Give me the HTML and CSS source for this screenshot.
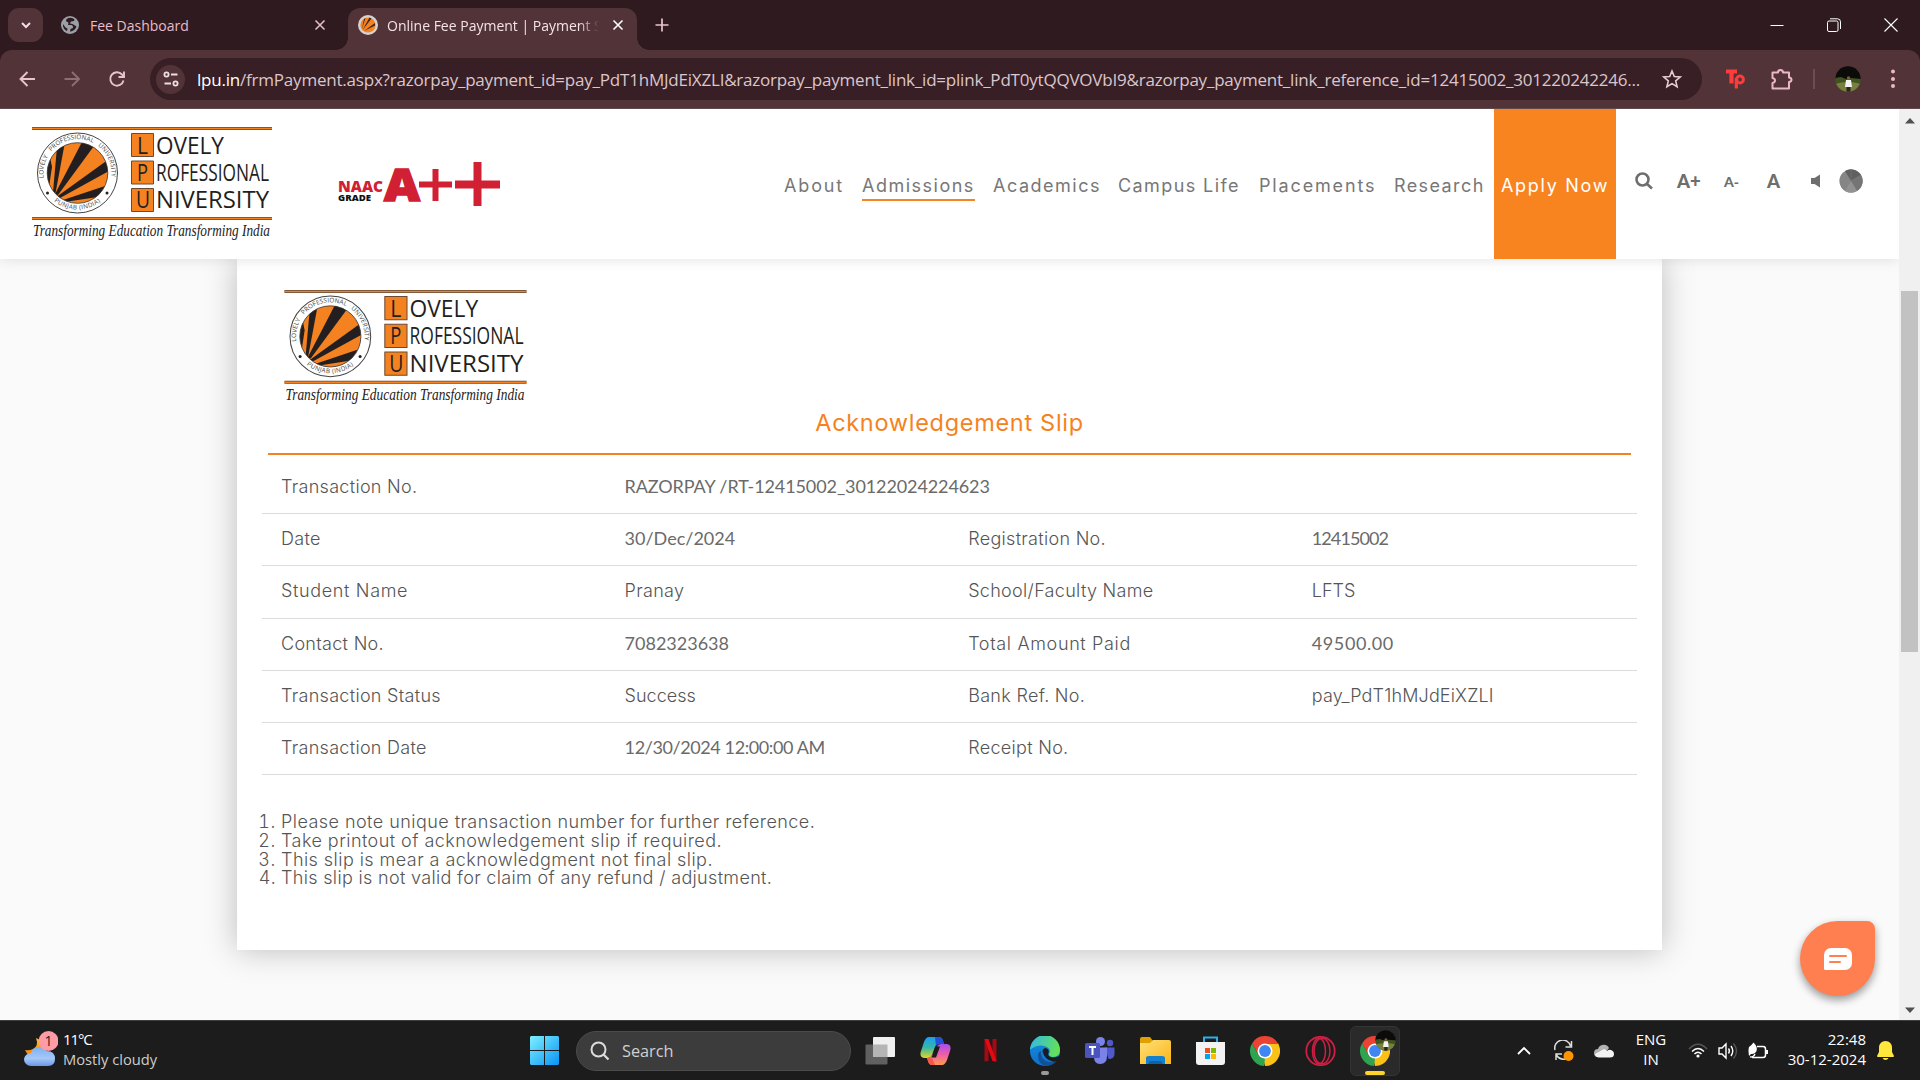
FILE: index.html
```html
<!DOCTYPE html>
<html lang="en">
<head>
<meta charset="utf-8">
<title>Online Fee Payment | Payment Slip</title>
<link rel="stylesheet" href="styles.css">
</head>
<body>
<svg class="defs" width="0" height="0">
  <defs>
    <clipPath id="sunClip"><circle cx="45.5" cy="46" r="30.3"/></clipPath>
    <linearGradient id="gWin" x1="0" y1="0" x2="1" y2="1"><stop offset="0" stop-color="#7df0ff"/><stop offset="1" stop-color="#0a94f5"/></linearGradient>
    <linearGradient id="gEdgeA" x1="0" y1="0" x2="1" y2="0.3"><stop offset="0" stop-color="#2fb7ee"/><stop offset="1" stop-color="#62e05a"/></linearGradient>
    <linearGradient id="gEdgeB" x1="0" y1="0" x2="0" y2="1"><stop offset="0" stop-color="#1490df"/><stop offset="1" stop-color="#0f6fc9"/></linearGradient>
    <linearGradient id="gCopA" x1="0" y1="0" x2="0" y2="1"><stop offset="0" stop-color="#1aa0f5"/><stop offset=".5" stop-color="#35b7a5"/><stop offset="1" stop-color="#e2d527"/></linearGradient>
    <linearGradient id="gCopB" x1="0" y1="0" x2="0" y2="1"><stop offset="0" stop-color="#a64df0"/><stop offset=".5" stop-color="#ee5fa5"/><stop offset="1" stop-color="#ff9a4d"/></linearGradient>
    <linearGradient id="gCloud" x1="0" y1="0" x2="0" y2="1"><stop offset="0" stop-color="#7db0f3"/><stop offset=".6" stop-color="#a5c8f8"/><stop offset="1" stop-color="#6a97ea"/></linearGradient>
    <linearGradient id="gMoon" x1="0" y1="0" x2="0" y2="1"><stop offset="0" stop-color="#fbc02d"/><stop offset="1" stop-color="#f57c00"/></linearGradient>
    <linearGradient id="gFolder" x1="0" y1="0" x2="1" y2="1"><stop offset="0" stop-color="#ffe07a"/><stop offset="1" stop-color="#fbb516"/></linearGradient>
    <symbol id="lpu" viewBox="0 0 240 116">
      <path d="M0 1.5H240M0 91.5H240" stroke="#5e4a3c" stroke-width="3"/>
      <path d="M0 1.5H240M0 91.5H240" stroke="#f58220" stroke-width="1.6"/>
      <circle cx="45.5" cy="46" r="40" fill="#fff" stroke="#444" stroke-width="1"/>
      <circle cx="45.5" cy="46" r="30.3" fill="#f58220"/>
      <g clip-path="url(#sunClip)" fill="#231f20">
        <path d="M21 65L25 20L33 15L23.500 66Z"/>
        <path d="M23 67L50.500 14L62 19L26 68Z"/>
        <path d="M25 69.500L77 32L77 44L28 71Z"/>
        <path d="M31 73L73 59L66 70L36 74.500Z"/>
        <path d="M17 60L14 40L18 30L20 40Z"/>
      </g>
      <circle cx="45.5" cy="46" r="30.3" fill="none" stroke="#333" stroke-width=".8"/>
      <path id="ringTop" d="M12 52A34 34 0 1 1 79 52" fill="none"/>
      <path id="ringBot" d="M19 71.5A37.5 37.5 0 0 0 72 71.5" fill="none"/>
      <g class="ring-text">
        <text><textPath href="#ringTop" startOffset="1" textLength="115">LOVELY &#160; PROFESSIONAL &#160; UNIVERSITY</textPath></text>
        <text><textPath href="#ringBot" startOffset="4" textLength="50">PUNJAB (INDIA)</textPath></text>
      </g>
      <circle cx="15.500" cy="66" r="1.500" fill="#222"/><circle cx="75" cy="66" r="1.500" fill="#222"/>
      <g fill="#f58220" stroke="#6b4a33" stroke-width="1"><path d="M99.500 6.500h22v23h-22zM99.500 34h22v23h-22zM99.500 61.500h22v23h-22z"/></g>
      <g class="logo-caps">
        <text x="105" y="26.500" textLength="11" lengthAdjust="spacingAndGlyphs">L</text>
        <text x="105" y="53.500" textLength="11" lengthAdjust="spacingAndGlyphs">P</text>
        <text x="104" y="81" textLength="14" lengthAdjust="spacingAndGlyphs">U</text>
        <text x="124" y="26.500" textLength="68" lengthAdjust="spacingAndGlyphs">OVELY</text>
        <text x="124" y="53.500" textLength="113" lengthAdjust="spacingAndGlyphs">ROFESSIONAL</text>
        <text x="124" y="81" textLength="113" lengthAdjust="spacingAndGlyphs">NIVERSITY</text>
      </g>
      <text class="logo-motto" x="1" y="109" textLength="237" lengthAdjust="spacingAndGlyphs">Transforming Education Transforming India</text>
    </symbol>
    <symbol id="chrome" viewBox="0 0 30 30">
      <path d="M15 15L28 7.500A15 15 0 0 1 15 30Z" fill="#fbc116"/>
      <path d="M15 7.500H28A15 15 0 0 1 28.700 9L20 15Z" fill="#fbc116"/>
      <path d="M21.500 18.700L15 30L13 22Z" fill="#fbc116"/>
      <path d="M2 7.500A15 15 0 0 1 28 7.500H15L8.500 18.700Z" fill="#ea4335"/>
      <path d="M2 7.500L8.500 18.700L15 22.500L14 30A15 15 0 0 1 2 7.500Z" fill="#30a350"/>
      <circle cx="15" cy="15" r="7.500" fill="#fff"/><circle cx="15" cy="15" r="5.900" fill="#3f85f4"/>
    </symbol>
    <symbol id="portrait" viewBox="0 0 26 26">
      <clipPath id="avClip"><circle cx="13" cy="13" r="12.700"/></clipPath>
      <g clip-path="url(#avClip)">
        <path d="M0 0H26V13H0Z" fill="#0b0b0a"/><path d="M0 12l6-1 5 2 5-1 10 1V26H0Z" fill="#41531f"/><path d="M0 18q13-4 26 0V26H0Z" fill="#77803f"/>
        <path d="M11 14h5l1 7h-7Z" fill="#f3f3f3"/><circle cx="13.500" cy="12" r="1.700" fill="#7a5b45"/><path d="M11.500 21h4v5h-4Z" fill="#2a241e"/>
      </g>
    </symbol>
  </defs>
</svg>

<header class="tabs">
  <button class="tab-search"><svg width="14" height="14" viewBox="0 0 14 14"><path d="M3 5l4 4 4-4" fill="none" stroke="#f2dfe3" stroke-width="2"/></svg></button>
  <div class="tab tab-idle">
    <svg width="18" height="18" viewBox="0 0 18 18"><circle cx="9" cy="9" r="9" fill="#9aa0a6"/><path d="M9.500 1.800Q5.500 2 5 4.500q0 1.500 2.500 2l-.5 2.500h3.500q2 .5 1.500 3l-2.500 1-.5 2.700q5-1 6.500-5.200l-4-2.500-2.500-.5 1-2 3-.5 .5-1.500Q12 2 9.500 1.800ZM2 8q-.5 4 3 6.500l1 .5.5-2.500-2-1Z" fill="#2f1a1f"/></svg>
    <span class="tab-title t-idle">Fee Dashboard</span>
    <svg class="x" width="12" height="12" viewBox="0 0 12 12"><path d="M1.500 1.500l9 9M10.500 1.500l-9 9" stroke="#e3bcc6" stroke-width="1.600"/></svg>
  </div>
  <div class="tab tab-live">
    <svg width="20" height="20" viewBox="0 0 20 20"><circle cx="10" cy="10" r="10" fill="#d6d2d2"/><circle cx="10" cy="10" r="7.600" fill="#f58220"/><path d="M4 14L6 4l1.500-1zM4.500 15L11.500 2.500l2 1zM6 16l11-8v2.500z" fill="#3a2a22"/></svg>
    <span class="tab-title t-live">Online Fee Payment | Payment S</span>
    <svg class="x" width="12" height="12" viewBox="0 0 12 12"><path d="M1.500 1.500l9 9M10.500 1.500l-9 9" stroke="#fff" stroke-width="1.600"/></svg>
  </div>
  <svg class="plus" width="14" height="14" viewBox="0 0 14 14"><path d="M7 0.500v13M0.500 7h13" stroke="#e9c5ce" stroke-width="1.700"/></svg>
  <div class="win">
    <svg width="14" height="14" viewBox="0 0 14 14"><path d="M0.500 7.500h13" stroke="#fff" stroke-width="1"/></svg>
    <svg width="14" height="14" viewBox="0 0 14 14" fill="none" stroke="#fff"><rect x=".5" y="3" width="10.500" height="10.500" rx="1.500"/><path d="M3 .8h7.500a3 3 0 0 1 3 3V11"/></svg>
    <svg width="14" height="14" viewBox="0 0 14 14"><path d="M.5.5l13 13M13.500.5l-13 13" stroke="#fff" stroke-width="1.100"/></svg>
  </div>
</header>

<div class="toolbar">
  <svg class="nav-ic" width="20" height="20" viewBox="0 0 20 20" fill="none" stroke="#eac4cd" stroke-width="1.900"><path d="M18 10H4M10.500 3l-7 7 7 7"/></svg>
  <svg class="nav-ic" width="20" height="20" viewBox="0 0 20 20" fill="none" stroke="#8e6d74" stroke-width="1.900"><path d="M2.500 10h14M10 3l7 7-7 7"/></svg>
  <svg class="nav-ic" width="20" height="20" viewBox="0 0 20 20" fill="none" stroke="#eac4cd" stroke-width="1.900"><path d="M16.500 11.500A6.700 6.700 0 1 1 15 5.500l1.500 1.800M17 2.500V8h-5.500"/></svg>
  <div class="omni">
    <span class="chip"><svg width="16" height="16" viewBox="0 0 16 16" fill="none" stroke="#eedde1" stroke-width="1.800"><circle cx="3.500" cy="3.500" r="2.100"/><path d="M8 3.500h6.500M1.500 12.500H8"/><circle cx="12.500" cy="12.500" r="2.100"/></svg></span>
    <span class="url"><b>lpu.in</b>/frmPayment.aspx?razorpay_payment_id=pay_PdT1hMJdEiXZLI&amp;razorpay_payment_link_id=plink_PdT0ytQQVOVbI9&amp;razorpay_payment_link_reference_id=12415002_301220242246...</span>
    <svg class="star" width="20" height="20" viewBox="0 0 20 20"><path d="M10 2l2.300 5.500 6 .5-4.600 3.900 1.400 5.800L10 14.600l-5.100 3.100 1.400-5.800L1.700 8l6-.5z" fill="none" stroke="#e3cdd2" stroke-width="1.600"/></svg>
  </div>
  <svg class="tp" width="20" height="22" viewBox="0 0 20 22"><path d="M0 3.500h11M5.500 3.500v12" stroke-width="4.200"/><circle cx="14" cy="11.500" r="3.400" stroke-width="3"/><path d="M10.300 10v10.500" stroke-width="3.200"/></svg>
  <svg class="puz" width="23" height="23" viewBox="0 0 23 23"><path d="M2.500 4.500H8q0-2.500 2.500-2.500T13 4.500h6v5q2.500.3 2.500 2.300T19 14v6.500H2.500V15q2.500-.5 2.500-2.500T2.500 10z" fill="none" stroke="#eab8c6" stroke-width="2" stroke-linejoin="round"/></svg>
  <i class="vr"></i>
  <svg class="av" width="26" height="26"><use href="#portrait"/></svg>
  <svg class="dots" width="6" height="20" viewBox="0 0 6 20" fill="#eab8c6"><circle cx="3" cy="2.500" r="2"/><circle cx="3" cy="10" r="2"/><circle cx="3" cy="17" r="2"/></svg>
</div>

<div class="view">
  <div class="page">
    <header class="site-head">
      <svg class="brand" width="240" height="116"><use href="#lpu"/></svg>
      <svg class="naac" width="164" height="46" viewBox="0 0 164 46">
        <text class="naac-a" x="0" y="30" textLength="45" lengthAdjust="spacingAndGlyphs">NAAC</text>
        <text class="naac-g" x="0" y="39" textLength="33" lengthAdjust="spacingAndGlyphs">GRADE</text>
        <text class="naac-big" x="46" y="38.500" textLength="36" lengthAdjust="spacingAndGlyphs">A</text>
        <path d="M81 22.500h33M97.500 7v32" stroke="#d12033" stroke-width="6"/><path d="M117 22.500h45M139.500 0v44" stroke="#d12033" stroke-width="8"/>
      </svg>
      <nav class="menu">
        <a class="m1">About</a><a class="m2 on">Admissions</a><a class="m3">Academics</a><a class="m4">Campus Life</a><a class="m5">Placements</a><a class="m6">Research</a>
      </nav>
      <a class="apply"><span>Apply Now</span></a>
      <div class="tools">
        <svg width="18" height="18" viewBox="0 0 18 18" fill="none" stroke="#6e6e6e" stroke-width="2.600"><circle cx="7.500" cy="7.500" r="6"/><path d="M12 12l5 4.500"/></svg>
        <b class="a-plus">A+</b><b class="a-minus">A-</b><b class="a-std">A</b>
        <svg class="spk" width="10" height="14" viewBox="0 0 10 14"><path d="M0 4h3.500L9 0.500v13L3.500 10H0z" fill="#6e6e6e"/></svg>
        <svg class="pie" width="24" height="24" viewBox="0 0 24 24"><circle cx="12" cy="12" r="11.600" fill="#858585"/><path d="M12 12L6 2A11.600 11.600 0 0 1 22 6Z" fill="#606060"/><path d="M12 12L22 6A11.600 11.600 0 0 1 18 22Z" fill="#757575"/><path d="M12 12L18 22A11.600 11.600 0 0 1 6 22Z" fill="#929292"/><path d="M12 12V0.500M12 12L22 6" stroke="#777" stroke-width=".7"/></svg>
      </div>
    </header>
    <main class="card">
      <svg class="card-logo" width="243" height="117"><use href="#lpu"/></svg>
      <h1><span>Acknowledgement Slip</span></h1>
      <div class="grid">
        <div class="row"><span>Transaction No.</span><span class="code">RAZORPAY /RT-12415002_30122024224623</span></div>
        <div class="row"><span>Date</span><span class="digits">30/Dec/2024</span><span>Registration No.</span><span class="narrow">12415002</span></div>
        <div class="row"><span class="name">Student Name</span><span>Pranay</span><span>School/Faculty Name</span><span class="caps">LFTS</span></div>
        <div class="row"><span>Contact No.</span><span class="digits">7082323638</span><span class="name">Total Amount Paid</span><span class="amount">49500.00</span></div>
        <div class="row"><span>Transaction Status</span><span class="caps">Success</span><span>Bank Ref. No.</span><span class="ref">pay_PdT1hMJdEiXZLI</span></div>
        <div class="row"><span>Transaction Date</span><span class="stamp">12/30/2024 12:00:00 AM</span><span>Receipt No.</span><span></span></div>
      </div>
      <ol>
        <li>Please note unique transaction number for further reference.</li>
        <li>Take printout of acknowledgement slip if required.</li>
        <li>This slip is mear a acknowledgment not final slip.</li>
        <li class="long">This slip is not valid for claim of any refund / adjustment.</li>
      </ol>
    </main>
    <div class="chat"><svg width="28" height="22" viewBox="0 0 28 22"><path d="M7 0H21A7 7 0 0 1 28 7V15A7 7 0 0 1 21 22H1.500A1.500 1.500 0 0 1 0 20.500V7A7 7 0 0 1 7 0Z" fill="#fff"/><path d="M6 8h16M6 14h10" stroke="#ff7f50" stroke-width="2" stroke-linecap="round"/></svg></div>
  </div>
  <div class="scroll">
    <svg width="10" height="6" viewBox="0 0 10 6"><path d="M0 5.500L5 0l5 5.500z" fill="#505050"/></svg>
    <i></i>
    <svg width="10" height="6" viewBox="0 0 10 6"><path d="M0 .5L5 6l5-5.500z" fill="#505050"/></svg>
  </div>
</div>

<footer class="bar">
  <div class="weather">
    <svg width="34" height="38" viewBox="0 0 34 38"><path d="M12 8q3 8-3 11-4 2-8 1 3 7 10 8l8-6-3-12z" fill="url(#gMoon)"/><path d="M7 36a7 6.500 0 0 1 0-13 9 9 0 0 1 16-2q8 0 8 8 0 7-7 7z" fill="url(#gCloud)"/><circle cx="24.500" cy="11" r="10" fill="#ff9ba4"/><text class="badge" x="24.500" y="16" text-anchor="middle">1</text></svg>
    <div><span class="temp">11°C</span><span class="sky">Mostly cloudy</span></div>
  </div>
  <svg class="start" width="29" height="29" viewBox="0 0 29 29"><path d="M1 0H14V14H0V1zM15 0H28L29 1V14H15zM0 15H14V29H1L0 28zM15 15H29V28L28 29H15z" fill="url(#gWin)"/></svg>
  <div class="search"><svg width="20" height="20" viewBox="0 0 20 20" fill="none" stroke="#dcdcdc" stroke-width="2"><circle cx="8.500" cy="8.500" r="7"/><path d="M13.500 13.500l5 5" stroke-width="2.300"/></svg><span>Search</span></div>
  <div class="apps">
    <i><svg width="30" height="30" viewBox="0 0 30 30"><rect x="0.500" y="8.500" width="22" height="20" rx="1" fill="#606060"/><rect x="8" y="1" width="22" height="20" rx="1" fill="#f0f0f0"/><path d="M8 8.500h14.500V21H8z" fill="#b5b5b5"/></svg></i>
    <i><svg width="31" height="28" viewBox="0 0 31 28"><path d="M9 0H19Q22 0 23 4L24 7H19Q16 7 15 10L12 18Q11 21 7 21H4Q-1 20 1 14L4 5Q6 0 9 0Z" fill="url(#gCopA)"/><path d="M15 0h4q3 0 4 4l1 3h-5q-2 0-3 2z" fill="#2250d8"/><path d="M22 28H12Q9 28 8 24L7 21q4 0 5-3l5-8q1-3 4-3h6q5 1 3 7l-3 9q-2 5-5 5z" fill="url(#gCopB)"/><path d="M15.500 9.500h4.500l-4 11h-4.500z" fill="#1c1c1c"/><path d="M7 21h5l3 7h-3q-3 0-4-4z" fill="#f4574b"/></svg></i>
    <i><svg width="13" height="23" viewBox="0 0 13 23"><path d="M0.500 0H4.500V22L0.500 22.500zM8.500 0h4V22.500L8.500 22z" fill="#a50912"/><path d="M0.500 0h4l8 22.500-4-.5z" fill="#e50914"/></svg></i>
    <i class="dash"><svg width="30" height="30" viewBox="0 0 30 30"><circle cx="15" cy="15" r="15" fill="url(#gEdgeB)"/><path d="M0 14A15 15 0 0 1 30 14Q30 21 23 21q-4 0-4-3 2-3-.5-6Q15 9 10 9.500 4 10 0 14Z" fill="url(#gEdgeA)"/><path d="M11 15Q10 24 19 26q5 .5 9-3.500-4 7.500-12 7.500Q8 28 8 20q0-4 3-5Z" fill="#11509a"/><path d="M12.500 15.500q0-3 3-3.500 4 1 3 5-1 2 1 3.500 4 2 8 0l4-1v4l-3 1q-4 2-7 .5-7-2-9-9.500Z" fill="#1c1c1c"/></svg></i>
    <i><svg width="30" height="27" viewBox="0 0 30 27"><circle cx="15.500" cy="4.500" r="4.500" fill="#7b83eb"/><circle cx="25" cy="6" r="3.200" fill="#5059c9"/><path d="M20 10.500h9.500V17q0 5-6 5z" fill="#5059c9"/><path d="M9 10.500H22V19q0 8-7 8-6 0-6-7z" fill="#7b83eb"/><rect y="6" width="15" height="15" rx="1.500" fill="#4b53bc"/><path d="M4 10h7M7.500 10v8" stroke="#fff" stroke-width="2"/></svg></i>
    <i><svg width="31" height="28" viewBox="0 0 31 28"><path d="M0 2q0-2 2-2h8l3 4v4H0z" fill="#e0a000"/><path d="M0 6h10l3-3h16q2 0 2 2V27H0z" fill="url(#gFolder)"/><path d="M6 27V21q0-2 3-2h13q3 0 3 2v6z" fill="#1580cd"/><path d="M10 24h11l2 3H8z" fill="#0e63a8"/></svg></i>
    <i><svg width="29" height="30" viewBox="0 0 29 30"><path d="M8 7V1.500H21V7" fill="none" stroke="#2bb0ea" stroke-width="2"/><path d="M0 6H29V26q0 3-3 3H3q-3 0-3-3z" fill="#f3f3f3"/><path d="M9 12h5v5H9z" fill="#f25022"/><path d="M15 12h5v5h-5z" fill="#7fba00"/><path d="M9 18h5v5H9z" fill="#00a4ef"/><path d="M15 18h5v5h-5z" fill="#ffb900"/></svg></i>
    <i><svg width="30" height="30"><use href="#chrome"/></svg></i>
    <i><svg width="31" height="30" viewBox="0 0 31 30" fill="none" stroke="#cf1f44"><circle cx="15.500" cy="15" r="14.200" stroke-width="1.800"/><ellipse cx="14" cy="15" rx="6.500" ry="12.800" stroke-width="1.500"/><ellipse cx="17" cy="15" rx="8" ry="12.800" stroke-width="1.500"/></svg></i>
    <i class="live"><svg width="36" height="36" viewBox="0 0 36 36"><use href="#chrome" x="0" y="6" width="30" height="30"/><use href="#portrait" x="15" y="0" width="21" height="21"/></svg></i>
  </div>
  <div class="tray">
    <svg class="t1" width="14" height="9" viewBox="0 0 14 9"><path d="M1 8l6-6 6 6" fill="none" stroke="#fff" stroke-width="1.800"/></svg>
    <svg class="t2" width="22" height="22" viewBox="0 0 22 22" fill="none" stroke="#ddd" stroke-width="1.500"><path d="M2 10A8 8 0 0 1 17.500 6M18.500 1v6h-6M3 20v-6h6M3.500 15q3 5 9 4"/><circle cx="15.500" cy="16" r="5" fill="#ff9500" stroke="none"/></svg>
    <svg class="t3" width="20" height="14" viewBox="0 0 20 14"><path d="M4 13a4 4 0 0 1 0-8 6 6 0 0 1 11-1l-7 9z" fill="#b2b2b2"/><path d="M4.500 13.500Q1 13 1 10l9-5q2 1 3 2 2-2 4-1 3 1 3 4 0 3.500-4 3.500z" fill="#f3f3f3"/></svg>
    <div class="lang"><span>ENG</span><span>IN</span></div>
    <svg class="t4" width="20" height="16" viewBox="0 0 20 16" fill="none" stroke-width="1.500"><path d="M1 6q9-9.500 18 0" stroke="#555"/><path d="M4 8.500q6-6 12 0M6.500 11q3.500-3.500 7 0" stroke="#fff"/><circle cx="10" cy="13" r="1.600" fill="#fff"/></svg>
    <svg class="t5" width="20" height="18" viewBox="0 0 20 18" fill="none" stroke="#fff" stroke-width="1.400"><path d="M1 6h3l4-4v14l-4-4H1zM10.500 6.500q1.800 2.500 0 5M13 4q3.500 5 0 10"/><path d="M15.500 1.500q6 7.500 0 15" stroke="#555"/></svg>
    <svg class="t6" width="20" height="18" viewBox="0 0 20 18"><path d="M9 4.500h6q2.500 0 2.500 2.500v6q0 2.500-2.500 2.500H4" fill="none" stroke="#fff" stroke-width="1.500"/><path d="M18 8h2v4h-2z" fill="#fff"/><path d="M5.500.5Q10 5 8.500 9 7 12.500 3 12l-2 2Q0 8 1 5q2-1 4.500-4.500z" fill="#fff"/><path d="M2 15q4 0 5-3" stroke="#fff" stroke-width="1.300" fill="none"/></svg>
    <div class="clock"><span>22:48</span><span>30-12-2024</span></div>
    <svg class="t7" width="17" height="19" viewBox="0 0 17 19"><path d="M8.500 0q6 0 6.500 6.500V11l2 4q0 1-1 1H1q-1 0-1-1l2-4V6.500Q2.500 0 8.500 0zM5.500 17h6q-1 2-3 2t-3-2z" fill="#ffe83b"/></svg>
  </div>
</footer>
</body>
</html>
```
FILE: styles.css
```css
* { box-sizing: border-box; }
html, body { margin: 0; width: 1920px; height: 1080px; overflow: hidden; }
body { display: flex; flex-direction: column; background: #2f1a1f; font-family: "Open Sans", "Noto Sans", sans-serif; }
svg { display: block; flex: none; }
.defs { position: absolute; }

/* tab strip */
.tabs { height: 50px; display: flex; align-items: center; padding-left: 8px; background: #2f1a1f; }
.tab-search { width: 35px; height: 34px; border: 0; border-radius: 11px; background: #513338; padding: 0; display: grid; place-items: center; }
.tab { display: flex; align-items: center; }
.tab-idle { width: 305px; padding: 0 22px 0 18px; }
.tab-live { width: 289px; height: 42px; margin-top: 8px; padding: 0 13px 8px 10px; background: #513338; border-radius: 12px 12px 0 0; position: relative; }
.tab-live::before, .tab-live::after { content: ""; position: absolute; bottom: 0; width: 12px; height: 12px; }
.tab-live::before { left: -12px; background: radial-gradient(circle at 0 0, transparent 11.5px, #513338 12px); }
.tab-live::after { right: -12px; background: radial-gradient(circle at 100% 0, transparent 11.5px, #513338 12px); }
.tab-title { font-size: 14px; white-space: nowrap; }
.t-idle { margin-left: 11px; color: #e8bcc8; }
.t-live { margin-left: 9px; width: 216px; color: #f4e3e7; -webkit-mask-image: linear-gradient(90deg, #000 192px, transparent 212px); }
.tab .x { margin-left: auto; }
.plus { margin-left: 18px; }
.win { margin-left: auto; display: flex; gap: 43px; padding-right: 22px; }

/* toolbar */
.toolbar { height: 59px; display: flex; align-items: center; padding-left: 17px; background: #513338; border-radius: 12px 12px 0 0; border-bottom: 1px solid #62474b; }
.nav-ic { margin-right: 25px; }
.omni { width: 1552px; height: 42px; margin-left: -2px; padding: 0 20px 0 6px; display: flex; align-items: center; background: #371f25; border-radius: 21px; }
.chip { width: 29px; height: 29px; border-radius: 50%; background: #513338; display: grid; place-items: center; }
.url { margin-left: 12px; width: 1446px; font-size: 17px; letter-spacing: -0.21px; color: #dcc6cb; white-space: nowrap; }
.url b { font-weight: 400; color: #fff; }
.star { margin-left: auto; }
.tp { margin-left: 24px; fill: none; stroke: #ff3b3b; }
.puz { margin-left: 24px; }
.vr { width: 2px; height: 20px; margin-left: 20px; background: #6e4c53; }
.av { margin-left: 20px; }
.dots { margin-left: 29px; }

/* viewport */
.view { height: 911px; display: flex; }
.page { width: 1899px; background: #fafafa; position: relative; overflow: hidden; display: flex; flex-direction: column; align-items: center; }
.scroll { width: 21px; background: #f0f0f0; display: flex; flex-direction: column; align-items: center; padding: 9px 0 7px; }
.scroll i { width: 17px; height: 361px; margin: 167px 0 auto; background: #c2c2c2; }

.site-head { width: 1899px; height: 150px; flex: none; display: flex; background: #fff; box-shadow: 0 0 14px rgba(0,0,0,.12); z-index: 1; padding-left: 32px; font-family: Inter, "Open Sans", sans-serif; }
.brand { margin-top: 18px; }
.ring-text { font: 6.3px "Open Sans", sans-serif; fill: #444; }
.logo-caps { font: 23px "Open Sans", sans-serif; fill: #231f20; }
.logo-motto { font: italic 17px "Liberation Serif", serif; fill: #222; }
.naac { margin: 53px 0 0 66px; font-family: "Open Sans", sans-serif; font-weight: 800; fill: #d12033; }
.naac-a { font-size: 15.5px; }
.naac-g { font-size: 9px; fill: #111; }
.naac-big { font-size: 45px; stroke: #d12033; stroke-width: 1.5px; }
.menu { margin: 62px 0 0 282px; display: flex; height: 30px; }
.menu a { font-size: 18px; line-height: 30px; height: 30px; letter-spacing: 1.5px; color: #777; white-space: nowrap; }
.menu .on { border-bottom: 2px solid #f8841f; }
.m1 { width: 60px; margin-right: 18px; }
.m2 { width: 113px; margin-right: 18px; }
.m3 { width: 107px; margin-right: 18px; }
.m4 { width: 123px; margin-right: 18px; }
.m5 { width: 117px; margin-right: 18px; }
.m6 { width: 98px; }
.menu .m1, .menu .m5 { letter-spacing: 1.85px; }
.menu .m6, .menu .m4 { letter-spacing: 1.4px; }
.apply { width: 122px; padding: 62px 0 0 7px; margin-left: 2px; background: #f8841f; color: #fff; font-size: 18px; line-height: 30px; letter-spacing: 1.7px; white-space: nowrap; }
.tools { margin: 56px 0 0 19px; height: 32px; display: flex; align-items: center; color: #6e6e6e; line-height: 32px; font-family: Lato, sans-serif; }
.tools b { font-weight: 900; height: 32px; }
.a-plus { width: 26px; margin-left: 24px; font-size: 18.5px; }
.a-minus { width: 16px; margin-left: 21px; font-size: 14px; padding-top: 1px; }
.a-std { width: 15px; margin-left: 27px; font-size: 18.5px; }
.spk { margin-left: 29px; }
.pie { margin-left: 18px; }

.card { width: 1425px; height: 691px; background: #fff; box-shadow: 0 0 30px rgba(0,0,0,.25); display: flex; flex-direction: column; color: #555; font-family: Inter, "Open Sans", sans-serif; }
.card-logo { margin: 31px 0 0 47px; }
h1 { margin: 0 31px; height: 48px; border-bottom: 2px solid #f58220; text-align: center; font-size: 23.5px; font-weight: 400; line-height: 32px; letter-spacing: .7px; color: #f58220; }
.grid { margin: 7px 25px 0; }
.row { display: grid; grid-template-columns: repeat(4, 343.6px); align-items: center; height: 52.2px; padding: 0 0 2px 19px; border-bottom: 1px solid #dcdcdc; font-size: 18px; font-weight: 300; letter-spacing: .3px; white-space: nowrap; }
.row .code, .row .digits, .row .narrow, .row .amount, .row .stamp { font-family: Lato, sans-serif; color: #6a6a6a; font-weight: 400; padding-bottom: 1px; }
.row .name { letter-spacing: .65px; }
.row .caps { letter-spacing: 0; }
.row .ref { letter-spacing: .15px; }
.row .code { letter-spacing: -.1px; }
.row .digits { letter-spacing: 0; }
.row .narrow { letter-spacing: -.9px; }
.row .amount { letter-spacing: .6px; }
.row .stamp { letter-spacing: -.4px; }
ol { margin: 38px 0 0 44px; padding: 0; font-size: 18px; font-weight: 300; line-height: 18.7px; letter-spacing: .45px; }
.long { letter-spacing: .33px; }

.chat { position: absolute; left: 1800px; top: 812px; width: 75px; height: 75px; border-radius: 50% 8px 50% 50%; background: #ff7f50; box-shadow: 0 4px 8px rgba(0,0,0,.4); display: grid; place-items: center; }

/* taskbar */
.bar { height: 60px; display: flex; align-items: center; background: #1c1c1c; border-top: 1px solid #3c3f3f; color: #fff; font-size: 15px; }
.weather { width: 530px; display: flex; padding-left: 24px; gap: 6px; }
.weather div, .lang, .clock { display: flex; flex-direction: column; line-height: 20px; white-space: nowrap; padding-bottom: 3px; }
.weather div { margin: -1px 0 0 -1px; }
.badge { font-size: 14px; fill: #222; }
.temp { letter-spacing: -1.1px; }
.sky { color: #ccc; font-size: 14.7px; }
.search { width: 275px; height: 40px; margin: 0 1.5px 0 17px; border-radius: 20px; background: #3c3c3c; border: 1px solid #4b4b4b; display: flex; align-items: center; padding-left: 13px; gap: 12px; font-size: 16.3px; color: #d0d0d0; }
.apps { display: flex; }
.apps i { width: 55px; height: 50px; display: grid; place-items: center; position: relative; }
.apps .live::before { content: ""; position: absolute; inset: 0 2.5px; background: #2a2a2a; border: 1px solid #343434; border-radius: 6px; }
.apps .live svg { position: relative; left: 3px; top: -3px; }
.apps .dash::after, .apps .live::after { content: ""; position: absolute; bottom: 1px; height: 4px; border-radius: 2px; width: 8px; left: 23.5px; background: #9a9a9a; }
.apps .live::after { width: 20px; left: 17.5px; background: #ffd42a; }
.tray { display: flex; align-items: center; margin-left: auto; padding-right: 26px; }
.t2 { margin-left: 22px; }
.t3 { margin-left: 19px; }
.lang { width: 74px; align-items: center; }
.t5 { margin-left: 10px; }
.t6 { margin-left: 10px; }
.clock { width: 98px; align-items: flex-end; }
.t7 { margin-left: 11px; }
```
